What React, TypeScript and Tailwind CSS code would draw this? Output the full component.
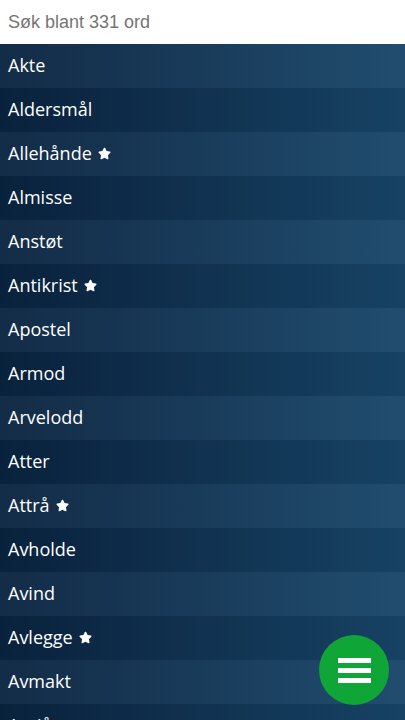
import { FaStar } from 'react-icons/fa';

interface Word {
  text: string;
  starred?: boolean;
}

const words: Word[] = [
  { text: 'Akte' },
  { text: 'Aldersmål' },
  { text: 'Allehånde', starred: true },
  { text: 'Almisse' },
  { text: 'Anstøt' },
  { text: 'Antikrist', starred: true },
  { text: 'Apostel' },
  { text: 'Armod' },
  { text: 'Arvelodd' },
  { text: 'Atter' },
  { text: 'Attrå', starred: true },
  { text: 'Avholde' },
  { text: 'Avind' },
  { text: 'Avlegge', starred: true },
  { text: 'Avmakt' },
  { text: 'Avsjåre' },
  { text: 'Bakvaskelse' },
  { text: 'Bane' },
];

export default function App() {
  return (
    <div className="min-h-screen w-full bg-gradient-to-r from-[#0a2440] to-[#19466a]">
      <input
        type="text"
        placeholder="Søk blant 331 ord"
        className="block h-11 w-full bg-white px-2 text-[18px] text-gray-900 placeholder:text-[#757575] outline-none font-['Liberation_Sans',Arial,sans-serif]"
      />
      <ul className="font-['Open_Sans',sans-serif]">
        {words.map((w, i) => (
          <li
            key={w.text}
            className={`flex h-11 items-center px-2 pb-px text-[18px] text-white ${
              i % 2 === 0 ? 'bg-white/[0.035]' : 'bg-black/[0.05]'
            }`}
          >
            <span>{w.text}</span>
            {w.starred && <FaStar className="ml-1.5 h-[13px] w-[13px] text-white" />}
          </li>
        ))}
      </ul>
      <button className="fixed bottom-[15px] right-[16px] flex h-[70px] w-[70px] flex-col items-center justify-center gap-[5px] rounded-full bg-[#10a537]">
        <span className="block h-[5px] w-[33px] bg-white" />
        <span className="block h-[5px] w-[33px] bg-white" />
        <span className="block h-[5px] w-[33px] bg-white" />
      </button>
    </div>
  );
}
